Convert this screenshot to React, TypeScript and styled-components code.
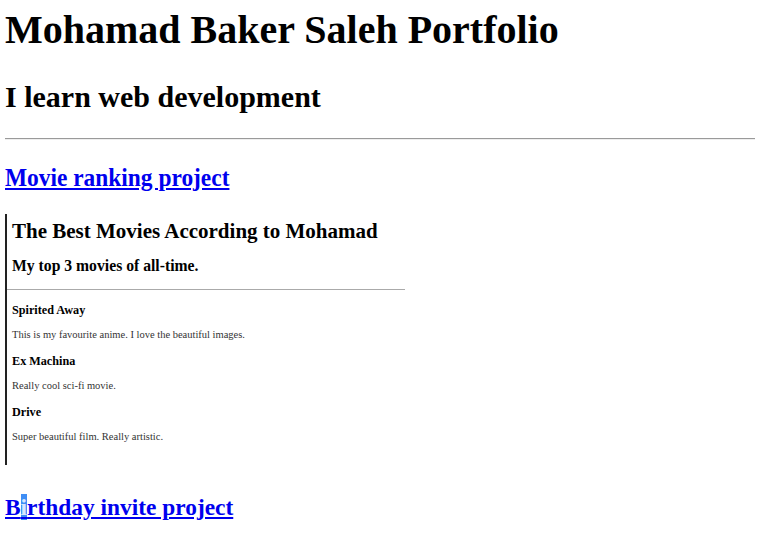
import React from "react";
import styled, { createGlobalStyle } from "styled-components";

const Global = createGlobalStyle`
  html, body { margin: 0; padding: 0; background: #fff; }
  body { font-family: "Liberation Serif", "Times New Roman", serif; color: #000; }
`;

const Page = styled.div`
  padding: 0 8px 0 5px;
  display: flex;
  flex-direction: column;
`;

const Title = styled.h1`
  font-size: 40px;
  line-height: 46px;
  font-weight: bold;
  margin: 7px 0 0;
`;

const Subtitle = styled.h2`
  font-size: 30px;
  line-height: 34px;
  font-weight: bold;
  margin: 27px 0 0;
`;

const Rule = styled.hr`
  margin: 24px 0 0;
  border: none;
  border-top: 1px solid #9a9a9a;
  border-bottom: 1px solid #eeeeee;
  height: 0;
`;

const ProjectLink = styled.a<{ $narrow?: boolean }>`
  display: inline-block;
  align-self: flex-start;
  font-size: ${(p) => (p.$narrow ? "26px" : "23.4px")};
  line-height: ${(p) => (p.$narrow ? "30px" : "28px")};
  font-weight: bold;
  color: #0000ee;
  text-decoration: underline;
  transform-origin: left center;
  ${(p) => (p.$narrow ? "transform: scaleX(0.9);" : "")}
`;

const LinkHeading = styled.h2<{ $top: number }>`
  margin: ${(p) => p.$top}px 0 0;
  display: flex;
`;

const Preview = styled.div`
  margin-top: 21px;
  width: 398px;
  height: 251px;
  border-left: 2px solid #222;
  display: flex;
  flex-direction: column;
  padding-left: 5px;
  box-sizing: content-box;
`;

const PreviewTitle = styled.h1`
  font-size: 21px;
  line-height: 24px;
  margin: 5px 0 0;
  font-weight: bold;
`;

const PreviewSub = styled.h2`
  font-size: 15.7px;
  line-height: 18px;
  margin: 14px 0 0;
  font-weight: bold;
`;

const PreviewRule = styled.hr`
  margin: 14px 0 0 -5px;
  border: none;
  border-top: 1px solid #aaa;
  height: 0;
  width: 398px;
`;

const Movie = styled.h3`
  font-size: 12.2px;
  line-height: 14px;
  font-weight: bold;
  margin: 12.5px 0 0;
`;

const Blurb = styled.p`
  font-size: 10.5px;
  line-height: 12px;
  color: #333;
  margin: 12.5px 0 0;
`;

const Selected = styled.span`
  background: #3f8ef5;
  color: #d6e8ff;
`;

const movies = [
  { title: "Spirited Away", text: "This is my favourite anime. I love the beautiful images." },
  { title: "Ex Machina", text: "Really cool sci-fi movie." },
  { title: "Drive", text: "Super beautiful film. Really artistic." },
];

export default function App() {
  return (
    <>
      <Global />
      <Page>
        <Title>Mohamad Baker Saleh Portfolio</Title>
        <Subtitle>I learn web development</Subtitle>
        <Rule />
        <LinkHeading $top={23}>
          <ProjectLink href="#" $narrow>Movie ranking project</ProjectLink>
        </LinkHeading>
        <Preview>
          <PreviewTitle>The Best Movies According to Mohamad</PreviewTitle>
          <PreviewSub>My top 3 movies of all-time.</PreviewSub>
          <PreviewRule />
          {movies.map((m) => (
            <React.Fragment key={m.title}>
              <Movie>{m.title}</Movie>
              <Blurb>{m.text}</Blurb>
            </React.Fragment>
          ))}
        </Preview>
        <LinkHeading $top={28}>
          <ProjectLink href="#">
            B<Selected>i</Selected>rthday invite project
          </ProjectLink>
        </LinkHeading>
      </Page>
    </>
  );
}
